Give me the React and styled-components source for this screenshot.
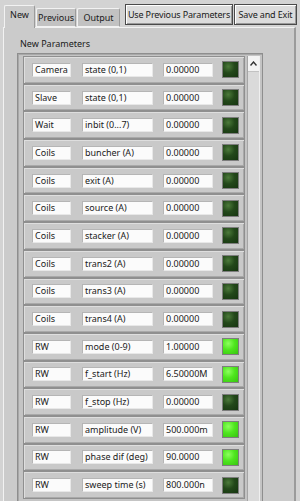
import styled, { createGlobalStyle } from "styled-components";

//------------------------------------  DATA  ------------------------------------//
const ROWS = [
    ["Camera", "state (0,1)", "0.00000", false],
    ["Slave", "state (0,1)", "0.00000", false],
    ["Wait", "inbit (0...7)", "0.00000", false],
    ["Coils", "buncher (A)", "0.00000", false],
    ["Coils", "exit (A)", "0.00000", false],
    ["Coils", "source (A)", "0.00000", false],
    ["Coils", "stacker (A)", "0.00000", false],
    ["Coils", "trans2 (A)", "0.00000", false],
    ["Coils", "trans3 (A)", "0.00000", false],
    ["Coils", "trans4 (A)", "0.00000", false],
    ["RW", "mode (0-9)", "1.00000", true],
    ["RW", "f_start (Hz)", "6.50000M", true],
    ["RW", "f_stop (Hz)", "0.00000", false],
    ["RW", "amplitude (V)", "500.000m", true],
    ["RW", "phase dif (deg)", "90.0000", true],
    ["RW", "sweep time (s)", "800.000n", false],
];

//------------------------------------  STYLES  ------------------------------------//
const GlobalStyle = createGlobalStyle`
    html, body {
        margin: 0;
        padding: 0;
        background: #d3d3d3;
        font-family: "Noto Sans", "Open Sans", sans-serif;
        color: #1a1a1a;
    }
`;

const Window = styled.div`
    width: 300px;
    height: 501px;
    overflow: hidden;
    background: #d3d3d3;
`;

const TopBar = styled.div`
    display: flex;
    align-items: flex-end;
    height: 27px;
    padding-left: 4px;
    box-sizing: border-box;
`;

const Tab = styled.div`
    width: ${(p) => p.$w}px;
    height: ${(p) => (p.$active ? "23px" : "19px")};
    margin-right: 1px;
    margin-bottom: ${(p) => (p.$active ? "-1px" : "0")};
    background: ${(p) => (p.$active ? "#cbcbcb" : "#c2c2c2")};
    border: 1px solid #9b9b9b;
    border-top-color: #f2f2f2;
    border-left-color: #f2f2f2;
    border-bottom: ${(p) => (p.$active ? "none" : "1px solid #f2f2f2")};
    border-radius: 2px 2px 0 0;
    font-size: 9px;
    line-height: 18px;
    text-align: center;
    box-sizing: border-box;
    z-index: ${(p) => (p.$active ? 2 : 1)};
    position: relative;
`;

const Buttons = styled.div`
    display: flex;
    gap: 1px;
    margin-left: 4px;
    align-self: flex-start;
    margin-top: 4px;
`;

const Button = styled.div`
    width: ${(p) => p.$w}px;
    height: 21px;
    background: #dcdcdc;
    border: 1px solid #4a4a4a;
    box-shadow: inset 1px 1px 0 #ffffff, inset -1px -1px 0 #9a9a9a;
    font-size: 9px;
    letter-spacing: -0.15px;
    line-height: 19px;
    text-align: center;
    box-sizing: border-box;
    white-space: nowrap;
`;

const Panel = styled.div`
    margin-left: 3px;
    width: 293px;
    height: 480px;
    background: #cbcbcb;
    border-top: 1px solid #f2f2f2;
    border-left: 1px solid #f2f2f2;
    border-right: 2px solid #9b9b9b;
    box-sizing: border-box;
    padding: 10px 0 0 13px;
`;

const SectionLabel = styled.div`
    font-size: 9px;
    line-height: 12px;
    margin-left: 3px;
    margin-bottom: 3px;
`;

const ArrayFrame = styled.div`
    display: flex;
    width: 246px;
    background: #c4c4c4;
    border: 1px solid #8e8e8e;
    box-shadow: inset 1px 1px 0 #a8a8a8;
    padding: 2px 2px 0 5px;
    box-sizing: border-box;
    height: 460px;
`;

const RowsColumn = styled.div`
    display: flex;
    flex-direction: column;
    width: 222px;
`;

const Row = styled.div`
    height: 27.7px;
    flex: none;
    display: flex;
    align-items: center;
    padding-left: 8px;
    background: #c9c9c9;
    border: 1px solid #8f8f8f;
    box-shadow: inset 1px 1px 0 #dedede, inset -1px -1px 0 #a9a9a9;
    box-sizing: border-box;
`;

const Field = styled.div`
    width: ${(p) => p.$w}px;
    margin-right: ${(p) => p.$gap}px;
    height: 14px;
    background: #fbfbfb;
    border: 1px solid #b5b5b5;
    border-right-color: #e8e8e8;
    border-bottom-color: #e8e8e8;
    box-sizing: border-box;
    font-size: 9px;
    line-height: 12px;
    padding-left: 2px;
    white-space: nowrap;
    overflow: hidden;
`;

const Led = styled.div`
    width: 17px;
    height: 17px;
    box-sizing: border-box;
    border: 1px solid #7d7d7d;
    background: ${(p) =>
        p.$on
            ? "radial-gradient(circle at 35% 30%, #8dff5e 0%, #4fe61f 45%, #37c410 100%)"
            : "radial-gradient(circle at 35% 30%, #4c7a3a 0%, #23481a 45%, #163510 100%)"};
`;

const Scrollbar = styled.div`
    width: 11px;
    margin-left: 2px;
    background: #dadada;
    border-left: 1px solid #a5a5a5;
    border-right: 1px solid #efefef;
    display: flex;
    flex-direction: column;
`;

const ArrowButton = styled.div`
    height: 15px;
    background: #f3f3f3;
    border-bottom: 1px solid #c2c2c2;
    display: flex;
    align-items: center;
    justify-content: center;
`;

//------------------------------------  COMPONENT  ------------------------------------//
const App = () => {
    return (
        <Window>
            <GlobalStyle />
            <TopBar>
                <Tab $active $w={31}>New</Tab>
                <Tab $w={40}>Previous</Tab>
                <Tab $w={43}>Output</Tab>
                <Buttons>
                    <Button $w={108}>Use Previous Parameters</Button>
                    <Button $w={63}>Save and Exit</Button>
                </Buttons>
            </TopBar>
            <Panel>
                <SectionLabel>New Parameters</SectionLabel>
                <ArrayFrame>
                    <RowsColumn>
                        {ROWS.map(([group, name, value, on], i) => (
                            <Row key={i}>
                                <Field $w={39} $gap={11}>{group}</Field>
                                <Field $w={71} $gap={10}>{name}</Field>
                                <Field $w={50} $gap={9}>{value}</Field>
                                <Led $on={on} />
                            </Row>
                        ))}
                    </RowsColumn>
                    <Scrollbar>
                        <ArrowButton>
                            <svg width="7" height="5" viewBox="0 0 7 5">
                                <path d="M0.5 4.5 L3.5 1 L6.5 4.5" fill="none" stroke="#333" strokeWidth="1.4" />
                            </svg>
                        </ArrowButton>
                    </Scrollbar>
                </ArrayFrame>
            </Panel>
        </Window>
    );
};

export default App;
